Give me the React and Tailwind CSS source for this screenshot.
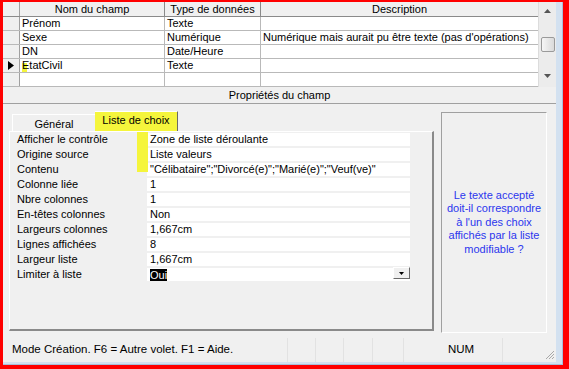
const fields = [
  { name: "Prénom", type: "Texte", desc: "" },
  { name: "Sexe", type: "Numérique", desc: "Numérique mais aurait pu être texte (pas d'opérations)" },
  { name: "DN", type: "Date/Heure", desc: "" },
  { name: "EtatCivil", type: "Texte", desc: "", current: true },
  { name: "", type: "", desc: "" },
];

const props = [
  ["Afficher le contrôle", "Zone de liste déroulante"],
  ["Origine source", "Liste valeurs"],
  ["Contenu", "\"Célibataire\";\"Divorcé(e)\";\"Marié(e)\";\"Veuf(ve)\""],
  ["Colonne liée", "1"],
  ["Nbre colonnes", "1"],
  ["En-têtes colonnes", "Non"],
  ["Largeurs colonnes", "1,667cm"],
  ["Lignes affichées", "8"],
  ["Largeur liste", "1,667cm"],
  ["Limiter à liste", "Oui", true],
];

function Arrow({ down }) {
  return (
    <svg width="7" height="4" viewBox="0 0 7 4">
      <path d={down ? "M0 0 L7 0 L3.5 4 Z" : "M0 4 L3.5 0 L7 4 Z"} fill="#555" />
    </svg>
  );
}

function Scrollbar() {
  return (
    <div className="flex w-[18px] flex-col items-center border-l border-[#dcdcdc] bg-[#ececec]">
      <div className="flex h-[17px] items-center justify-center">
        <Arrow />
      </div>
      <div className="ml-[1px] mt-[18px] h-[15px] w-[14px] rounded-[2px] border border-[#9a9a9a] bg-gradient-to-r from-[#f6f6f6] to-[#dadada]" />
      <div className="flex-1" />
      <div className="mb-[3px] flex h-[17px] items-center justify-center">
        <Arrow down />
      </div>
    </div>
  );
}

function FieldGrid() {
  return (
    <div className="flex h-[85px] bg-white">
      <div className="flex w-[535px] flex-col">
        <div className="flex h-[15px] border-b border-[#8a8a8a] bg-[#f0f0f0]">
          <div className="w-[17px] border-r border-[#a0a0a0]" />
          <div className="flex w-[145px] items-center justify-center border-r border-[#8a8a8a]">Nom du champ</div>
          <div className="flex w-[96px] items-center justify-center border-r border-[#8a8a8a]">Type de données</div>
          <div className="flex flex-1 items-center justify-center">Description</div>
        </div>
        {fields.map((f, i) => (
          <div key={i} className="flex h-[14px] border-b border-[#b9b9b9]">
            <div className="flex w-[17px] items-center justify-center border-r border-[#a0a0a0] bg-[#f0f0f0]">
              {f.current && (
                <svg width="6" height="9" viewBox="0 0 6 9">
                  <path d="M0 0 L6 4.5 L0 9 Z" fill="#000" />
                </svg>
              )}
            </div>
            <div className="relative flex w-[145px] items-center border-r border-[#b9b9b9] pl-[2px]">
              {f.current && <span className="absolute left-[2px] top-[4px] h-[9px] w-[5px] bg-[#f5f53c]" />}
              <span className="relative">{f.name}</span>
            </div>
            <div className="flex w-[96px] items-center border-r border-[#b9b9b9] pl-[2px]">{f.type}</div>
            <div className="flex flex-1 items-center pl-[2px]">{f.desc}</div>
          </div>
        ))}
      </div>
      <Scrollbar />
    </div>
  );
}

function PropertyRow({ label, value, selected }) {
  return (
    <div className="flex h-[15px]">
      <div className="w-[137px] pl-[7px] leading-[13px]">{label}</div>
      <div className="relative flex h-[13px] w-[263px] items-center bg-white pl-[3px]">
        {selected ? <span className="bg-black leading-[12px] text-white">{value}</span> : value}
        {selected && (
          <div className="absolute right-0 top-[-1px] flex h-[12px] w-[17px] items-center justify-center border-b border-l border-r border-t border-b-[#6a6a6a] border-l-white border-r-[#6a6a6a] border-t-white bg-[#f0f0f0]">
            <svg width="5" height="3" viewBox="0 0 5 3">
              <path d="M0 0 L5 0 L2.5 3 Z" fill="#000" />
            </svg>
          </div>
        )}
      </div>
    </div>
  );
}

function Properties() {
  return (
    <div className="flex flex-1 flex-col">
      <div className="flex h-[17px] items-center justify-center border-b border-[#a0a0a0]">Propriétés du champ</div>
      <div className="flex flex-1 pl-[6px]">
        <div className="mt-[6px] flex w-[425px] flex-col">
          <div className="flex h-[21px] items-end pl-[3px]">
            <div className="flex h-[17px] w-[83px] items-center justify-center border-l border-t border-white pt-[2px]">Général</div>
            <div className="flex h-[20px] w-[83px] items-center justify-center border-r border-t border-r-[#6a6a6a] border-t-white bg-[#f5f53c] pb-[2px]">Liste de choix</div>
          </div>
          <div className="relative h-[200px] border-b-2 border-l border-r-2 border-t border-b-[#8a8a8a] border-l-white border-r-[#8a8a8a] border-t-white pt-[1px]">
            <span className="absolute left-[127px] top-0 z-10 h-[40px] w-[11px] bg-[#f5f53c]" />
            {props.map(([l, v, s], i) => (
              <PropertyRow key={i} label={l} value={v} selected={s} />
            ))}
          </div>
        </div>
        <div className="ml-[7px] mt-[8px] flex h-[221px] w-[106px] items-center justify-center border border-b-white border-l-[#a0a0a0] border-r-white border-t-[#a0a0a0] text-center leading-[13.5px] text-[#2b36ee]">
          <p>
            Le texte accepté<br />
            doit-il correspondre<br />
            à l'un des choix<br />
            affichés par la liste<br />
            modifiable ?
          </p>
        </div>
      </div>
    </div>
  );
}

function StatusBar() {
  return (
    <div className="flex h-[24px] items-center text-[11.5px]">
      <div className="w-[284px] pl-[9px]">Mode Création. F6 = Autre volet. F1 = Aide.</div>
      <div className="h-full w-[28px] border-l border-[#e2e2e2]" />
      <div className="h-full w-[28px] border-l border-[#e2e2e2]" />
      <div className="h-full w-[29px] border-l border-[#e2e2e2]" />
      <div className="h-full w-[31px] border-l border-[#e2e2e2]" />
      <div className="flex h-full w-[99px] items-center border-l border-[#e2e2e2] pl-[44px]">NUM</div>
      <div className="relative h-full flex-1 border-l border-[#e2e2e2]">
        <svg className="absolute bottom-[2px] right-[1px]" width="10" height="10" viewBox="0 0 10 10">
          <path d="M9 1 L1 9 M9 4 L4 9 M9 7 L7 9" stroke="#a8a8a8" strokeWidth="1" />
        </svg>
      </div>
    </div>
  );
}

export default function App() {
  return (
    <div className="h-[369px] w-[569px] bg-[#ff0000] pb-[4px] pl-[3px] pr-[6px] pt-[2px] font-['Liberation_Sans',Arial,sans-serif] text-[11px] leading-none text-black">
      <div className="flex h-full border-b border-r border-[#a9bfd9] bg-[#d3e1f0] pb-[2px] pr-[6px]">
        <div className="flex h-full w-[553px] flex-col bg-[#f0f0f0]">
          <FieldGrid />
          <Properties />
          <StatusBar />
        </div>
      </div>
    </div>
  );
}
